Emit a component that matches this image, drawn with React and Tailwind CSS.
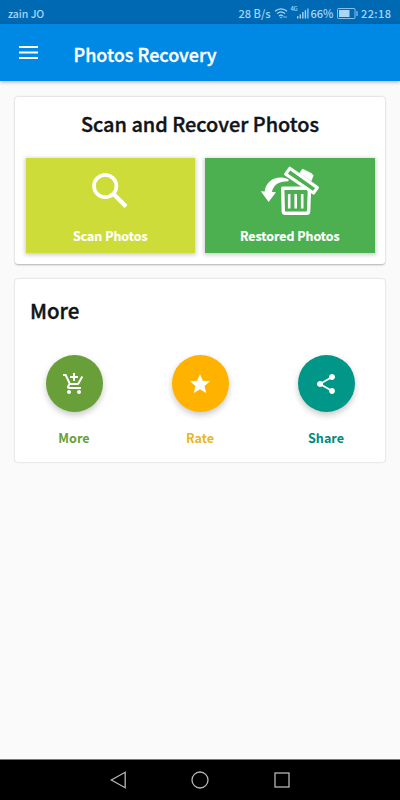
import React from 'react';

function StatusBar() {
  return (
    <div className="flex h-6 items-center bg-[#0069b4] pl-2 pr-2 text-[11px] leading-6 text-[#a9d6f5]">
      <span className="w-9 whitespace-nowrap pt-[3px] text-[10.5px] font-medium tracking-[-0.05px]">zain JO</span>
      <span className="ml-auto whitespace-nowrap pt-[2px] font-medium">28 B/s</span>
      <svg className="ml-[3px] mt-0.5 h-3 w-[14px]" viewBox="0 0 14 12" fill="none" stroke="currentColor" strokeWidth="1.2">
        <path d="M1 4.2C4.5 1 9.5 1 13 4.2M3 6.6c2.4-2.2 5.6-2.2 8 0M5 9c1.2-1.1 2.8-1.1 4 0" />
        <circle cx="7" cy="10.5" r="0.8" fill="currentColor" stroke="none" />
        <path d="M10 9v2M12 9v2" strokeWidth="0.8" />
      </svg>
      <span className="mb-1.5 ml-[3px] w-[6px] text-[6px] font-medium leading-[6px] tracking-[-0.5px]">4G</span>
      <svg className="mt-0.5 h-3 w-[12px]" viewBox="0 0 13 12" fill="currentColor">
        <path d="M0 9.5h1.5V12H0zM2.8 7.5h1.5V12H2.8zM5.6 5h1.5v7H5.6zM8.4 3h1.5v9H8.4zM11.2 1h1.3v11h-1.3z" />
      </svg>
      <span className="ml-[2px] w-6 whitespace-nowrap pt-[2px] font-medium">66%</span>
      <svg className="ml-[2.5px] mt-0.5 h-[11px] w-[21px]" viewBox="0 0 21 11">
        <rect x="0.5" y="0.5" width="17.5" height="10" rx="1" fill="none" stroke="currentColor" strokeWidth="0.8" />
        <rect x="2" y="2" width="10.5" height="7" fill="currentColor" />
        <path d="M20 3v5" stroke="currentColor" />
      </svg>
      <span className="ml-[3px] w-[31px] whitespace-nowrap pt-[2px] font-medium tracking-[0.4px]">22:18</span>
    </div>
  );
}

function AppBar() {
  return (
    <header className="relative flex h-[57px] items-center bg-[#0088e5] pl-[19px] text-white shadow-[0_1px_4px_rgba(0,0,0,0.3)]">
      <svg className="mb-[1px] h-[13px] w-[19px]" viewBox="0 0 19 13" fill="currentColor">
        <path d="M0 0h19v2H0zM0 5.5h19v2H0zM0 11h19v2H0z" />
      </svg>
      <h1 className="ml-[35.5px] mt-[3px] text-[18px] font-medium leading-6 [-webkit-text-stroke:0.35px_currentColor]">Photos Recovery</h1>
    </header>
  );
}

function SearchIcon() {
  return (
    <svg className="mr-[1.5px] h-9 w-9" viewBox="0 0 36 36" fill="none" stroke="currentColor">
      <circle cx="13.2" cy="13" r="11.2" strokeWidth="3.7" />
      <path d="M22 21.5L34 33.5" strokeWidth="4.2" />
    </svg>
  );
}

function RestoreIcon() {
  return (
    <svg className="h-[50px] w-[60px]" viewBox="0 0 60 50" fill="none" stroke="currentColor">
      <path d="M22.7 22.3H49.5L48.6 45.6Q48.4 47.3 46.7 47.3H25.1Q23.5 47.3 23.3 45.6Z" strokeWidth="3.4" strokeLinejoin="round" />
      <path d="M29.2 28v14.5M35.7 28v14.5M42.2 28v14.5" strokeWidth="2.6" />
      <path d="M29.8 2.3L57.3 21.6L53.5 27L25.7 8.2Z" fill="#4caf50" strokeWidth="3.2" strokeLinejoin="round" />
      <path d="M39.5 7.2L42.5 3L44.6 4L51.5 7.4L53.3 9.5L51.2 15Z" fill="currentColor" strokeWidth="0.5" />
      <path d="M28.5 13.2C18 8.5 6 13.5 4.7 25.5L0.8 25.2L8.6 36L16 26.3L12 26C13.2 19 18.5 15.2 28.5 15.2Z" fill="currentColor" stroke="none" />
    </svg>
  );
}

function Tile({ className, label, children }) {
  return (
    <button className={`flex h-[95px] flex-1 flex-col items-center text-white shadow-[0_1px_4px_1px_rgba(0,0,0,0.2)] ${className}`}>
      <span className="flex h-[66px] items-center justify-center">{children}</span>
      <span className="mt-[2px] text-[12.4px] font-bold leading-5 [-webkit-text-stroke:0.2px_currentColor]">{label}</span>
    </button>
  );
}

function Action({ circle, text, label, children }) {
  return (
    <div className="flex w-[57px] flex-col items-center">
      <button className={`flex size-[57px] items-center justify-center rounded-full text-white shadow-[0_3px_6px_rgba(0,0,0,0.22)] ${circle}`}>
        <svg className="size-6" viewBox="0 0 24 24" fill="currentColor">{children}</svg>
      </button>
      <span className={`mt-4 text-[12.6px] font-bold leading-5 ${text}`}>{label}</span>
    </div>
  );
}

export default function App() {
  return (
    <div className="flex h-[800px] w-[400px] flex-col overflow-hidden bg-[#fafafa] font-['Noto_Sans_CJK_SC','Noto_Sans',sans-serif]">
      <StatusBar />
      <AppBar />
      <main className="flex flex-1 flex-col gap-[15px] px-[15px] pt-4">
        <section className="h-[167px] rounded-[3px] bg-white px-[10.5px] shadow-[0_0.5px_2px_rgba(0,0,0,0.3)]">
          <h2 className="pt-[12px] text-center text-[19.9px] font-medium leading-[30px] text-[#101418] [-webkit-text-stroke:0.4px_currentColor]">Scan and Recover Photos</h2>
          <div className="mt-[19px] flex gap-[10px]">
            <Tile className="bg-[#cddc39]" label="Scan Photos"><SearchIcon /></Tile>
            <Tile className="bg-[#4caf50]" label="Restored Photos"><RestoreIcon /></Tile>
          </div>
        </section>
        <section className="h-[183px] rounded-[3px] bg-white shadow-[0_0_2px_rgba(0,0,0,0.25)]">
          <h2 className="pl-[15px] pt-[16px] text-[20.5px] font-medium leading-[30px] text-[#101418] [-webkit-text-stroke:0.4px_currentColor]">More</h2>
          <div className="mt-[30px] flex justify-between pl-[30.5px] pr-[30.5px]">
            <Action circle="bg-[#689f38]" text="text-[#689f38]" label="More">
              <path d="M11 9h2V6h3V4h-3V1h-2v3H8v2h3v3zm-4 9c-1.1 0-1.99.9-1.99 2S5.9 22 7 22s2-.9 2-2-.9-2-2-2zm10 0c-1.1 0-1.99.9-1.99 2s.89 2 1.99 2 2-.9 2-2-.9-2-2-2zm-9.83-3.25l.03-.12.9-1.63h7.45c.75 0 1.41-.41 1.75-1.03l3.86-7.01L19.42 4h-.01l-1.1 2-2.76 5H8.53l-.13-.27L6.16 6l-.95-2-.94-2H1v2h2l3.6 7.59-1.35 2.45c-.16.28-.25.61-.25.96 0 1.1.9 2 2 2h12v-2H7.42c-.13 0-.25-.11-.25-.25z" />
            </Action>
            <Action circle="bg-[#ffb300]" text="text-[#e9b71e]" label="Rate">
              <path d="M12 17.27L18.18 21l-1.64-7.03L22 9.24l-7.19-.61L12 2 9.19 8.63 2 9.24l5.46 4.73L5.82 21z" />
            </Action>
            <Action circle="bg-[#009688]" text="text-[#00897b]" label="Share">
              <path d="M18 16.08c-.76 0-1.44.3-1.96.77L8.91 12.7c.05-.23.09-.46.09-.7s-.04-.47-.09-.7l7.05-4.11c.54.5 1.25.81 2.04.81 1.66 0 3-1.34 3-3s-1.34-3-3-3-3 1.34-3 3c0 .24.04.47.09.7L8.04 9.81C7.5 9.31 6.79 9 6 9c-1.66 0-3 1.34-3 3s1.34 3 3 3c.79 0 1.5-.31 2.04-.81l7.12 4.16c-.05.21-.08.43-.08.65 0 1.61 1.31 2.92 2.92 2.92 1.61 0 2.92-1.31 2.92-2.92s-1.31-2.92-2.92-2.92z" />
            </Action>
          </div>
        </section>
      </main>
      <nav className="flex h-[41px] items-center justify-between border-t border-[#777] bg-black px-[110px] text-[#b5b5b5]">
        <svg className="h-[18px] w-4" viewBox="0 0 16 18" fill="none" stroke="currentColor" strokeWidth="1.3"><path d="M15.2 1.3v15.4L1.3 9z" /></svg>
        <svg className="size-[18px]" viewBox="0 0 18 18" fill="none" stroke="currentColor" strokeWidth="1.3"><circle cx="9" cy="9" r="8" /></svg>
        <svg className="size-4" viewBox="0 0 16 16" fill="none" stroke="currentColor" strokeWidth="1.3"><rect x="1" y="1" width="14" height="14" /></svg>
      </nav>
    </div>
  );
}
